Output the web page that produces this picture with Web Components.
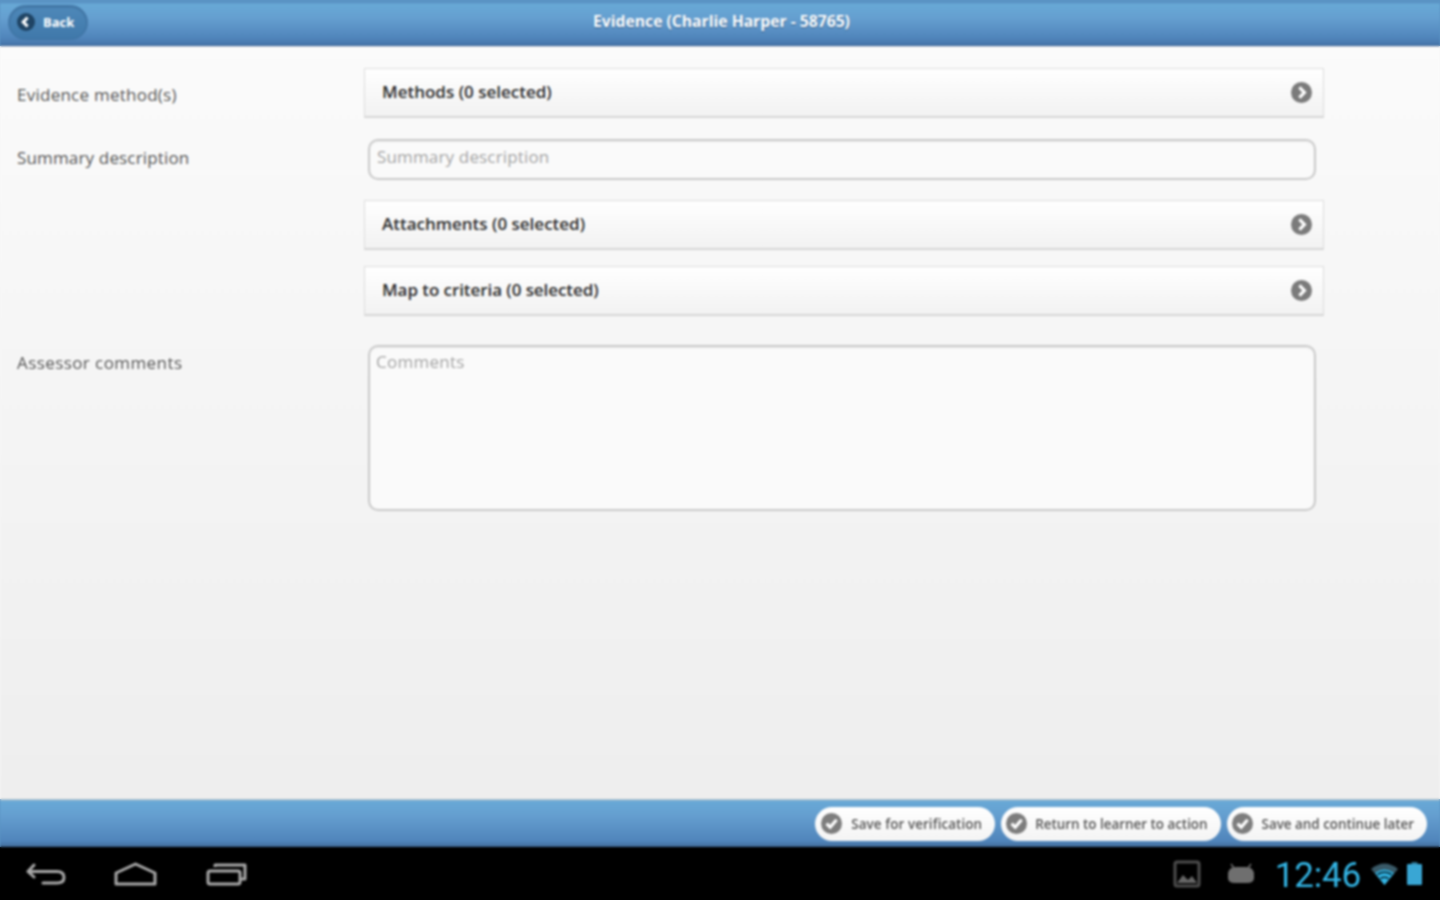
<!DOCTYPE html>
<html><head><meta charset="utf-8"><style>
html,body{margin:0;height:100%}
body{width:1440px;height:900px;overflow:hidden;font-family:"Open Sans","Liberation Sans",sans-serif;background:linear-gradient(#5a93c4 0 46px,#f5f5f5 46px 799px,#5a93c4 799px 847px,#000 847px)}
app-shell{filter:blur(.8px)}
</style></head><body>
<app-shell>
<top-bar slot="top" title-text="Evidence (Charlie Harper - 58765)"></top-bar>
<form-page slot="main">
  <form-row label="Evidence method(s)" style="--after:21px;--label-top:15px;--lls:.25px"><list-button>Methods (0 selected)</list-button></form-row>
  <form-row label="Summary description" style="--after:20px;--label-top:7px;--lls:.16px"><text-box placeholder="Summary description" h="41" style="--top:5px;--ls:.16px"></text-box></form-row>
  <form-row style="--after:16px"><list-button>Attachments (0 selected)</list-button></form-row>
  <form-row style="--after:29px"><list-button style="--ls:-.07px">Map to criteria (0 selected)</list-button></form-row>
  <form-row label="Assessor comments" style="--after:0px;--label-top:6px;--lls:.42px"><text-box placeholder="Comments" h="166" style="--top:4px;--ls:.27px;--left:6px"></text-box></form-row>
</form-page>
<action-bar slot="actions">
  <pill-button style="--ls:.1px;--pad:6px">Save for verification</pill-button>
  <pill-button style="--pad:5px;--gap:8px">Return to learner to action</pill-button>
  <pill-button>Save and continue later</pill-button>
</action-bar>
<nav-bar slot="nav"></nav-bar>
</app-shell>
<script>
const def=(name,html,init)=>customElements.define(name,class extends HTMLElement{
  constructor(){super();this.attachShadow({mode:'open'}).innerHTML=html;}
  connectedCallback(){init&&init(this,this.shadowRoot);}
});
def('app-shell',`<style>:host{display:flex;flex-direction:column;width:1440px;height:900px}
::slotted([slot=main]){flex:1}</style>
<slot name="top"></slot><slot name="main"></slot><slot name="actions"></slot><slot name="nav"></slot>`);

def('top-bar',`<style>:host{display:flex;align-items:center;position:relative;height:46px;box-sizing:border-box;padding:0 0 2px 8px;
background:linear-gradient(#5a93c4 0,#5a93c4 3px,#68a9d6 4px,#659fd0 18px,#5085bb 38px,#4777ac 44px,#3f6a9c 46px);color:#fff}
.back{display:flex;align-items:center;box-sizing:border-box;width:80px;height:35px;border-radius:18px;padding-left:8px;gap:8px;
background:linear-gradient(#4f89b9,#3f78aa);border:1px solid #4376a6;box-shadow:inset 0 1px 2px rgba(20,50,90,.35);font-size:13px;font-weight:700}
.ic{width:18px;height:18px;flex:none}
h1{position:absolute;left:0;right:0;margin:0;padding-left:3px;top:11px;text-align:center;font-size:15.7px;line-height:20px;font-weight:700;text-shadow:0 1px 1px rgba(30,60,100,.6)}
</style><div class="back"><svg class="ic" viewBox="0 0 18 18"><circle cx="9" cy="9" r="9" fill="#1f4464"/><path d="M10.600 4.600 6.200 9l4.400 4.400" fill="none" stroke="#fff" stroke-width="3"/></svg><span>Back</span></div><h1></h1>`,
(e,s)=>s.querySelector('h1').textContent=e.getAttribute('title-text'));

def('form-page',`<style>:host{display:block;box-sizing:border-box;padding:22px 116px 0 0;background:linear-gradient(#fbfbfb,#eeeeee);box-shadow:inset 0 1px 0 #d5d8dc}</style><slot></slot>`);

def('form-row',`<style>:host{display:flex;margin-bottom:var(--after,0)}
.l{box-sizing:border-box;width:364px;flex:none;padding:var(--label-top,0) 0 0 17px;font-size:17px;line-height:24px;color:#555;letter-spacing:var(--lls,0)}
.f{flex:1}</style><div class="l"></div><div class="f"><slot></slot></div>`,
(e,s)=>s.querySelector('.l').textContent=e.getAttribute('label')||'');

def('list-button',`<style>:host{display:flex;align-items:center;justify-content:space-between;box-sizing:border-box;height:50px;padding:0 11px 1px 17px;
border:1px solid #dcdcdc;border-bottom:2px solid #d6d6d6;background:linear-gradient(#fff,#f2f2f2);font-size:17px;font-weight:600;color:#2c2c2c;letter-spacing:var(--ls,0)}
span{padding-bottom:2px}
svg{width:21px;height:21px;flex:none}</style><span><slot></slot></span>
<svg viewBox="0 0 21 21"><circle cx="10.500" cy="10.500" r="10.500" fill="#7b7b7b"/><path d="M8.400 5.400 13.400 10.500 8.400 15.600" fill="none" stroke="#fff" stroke-width="3.200"/></svg>`);

def('text-box',`<style>:host{display:block;box-sizing:border-box;margin:0 8px 0 4px;padding:var(--top,6px) 7px 0 var(--left,7px);border:2px solid #c9c9c9;border-radius:10px;background:#fafafa;
font-size:17px;line-height:22px;color:#a4a4a4;letter-spacing:var(--ls,0);box-shadow:inset 0 1px 2px rgba(0,0,0,.06)}</style><span></span>`,
(e,s)=>{s.querySelector('span').textContent=e.getAttribute('placeholder');e.style.height=e.getAttribute('h')+'px'});

def('action-bar',`<style>:host{display:flex;justify-content:flex-end;align-items:center;gap:6px;box-sizing:border-box;height:48px;padding:1px 13px 0 0;
background:linear-gradient(#c9c9c9 0,#68a9d6 2px,#659fd0 16px,#5085bb 42px,#44709f 47px,#2f4f75 48px)}</style><slot></slot>`);

def('pill-button',`<style>:host{display:flex;align-items:center;box-sizing:border-box;height:34px;padding:0 13px 0 var(--pad,5px);gap:var(--gap,9px);border-radius:17px;
background:linear-gradient(#fff,#f4f4f4);font-size:13.4px;font-weight:600;color:#555;white-space:nowrap;letter-spacing:var(--ls,0)}
svg{width:21px;height:21px;flex:none}</style>
<svg viewBox="0 0 21 21"><circle cx="10.500" cy="10.500" r="10.500" fill="#7d7d7d"/><path d="M5.600 10.600 9.200 14.200 15.600 6.800" fill="none" stroke="#fff" stroke-width="3.200"/></svg><slot></slot>`);

def('nav-bar',`<style>:host{display:flex;align-items:center;height:53px;background:#000;position:relative}
.keys{display:flex;align-items:center;padding-left:26px;gap:48px;flex:1}
.keys svg:last-child{margin-left:1px}
.tray{display:flex;align-items:center;padding-right:18px}
svg{display:block;flex:none}
.t{font-family:Roboto,"Open Sans",sans-serif;font-weight:400;font-size:35px;line-height:53px;color:#33b5e5;margin:4px 10px 0 20px;letter-spacing:-.2px}
</style>
<div class="keys">
<svg width="40" height="24" viewBox="0 0 40 24" fill="none" stroke="#a8a8a8" stroke-width="3" stroke-linejoin="round" stroke-linecap="round"><path d="M8 3 2 9.500 8 15M2 9.500H31Q38 9.500 38 15.500 38 21 31 21H17"/></svg>
<svg width="43" height="24" viewBox="0 0 43 24" fill="none" stroke="#a8a8a8" stroke-width="3" stroke-linejoin="round"><path d="M21.500 2 41 11V22H2V11Z"/></svg>
<svg width="41" height="24" viewBox="0 0 41 24" fill="none" stroke="#a8a8a8" stroke-width="3" stroke-linejoin="round"><rect x="2" y="9" width="32" height="13" rx="2"/><path d="M9 5V3H39V17H35"/></svg>
</div>
<div class="tray">
<svg width="28" height="28" viewBox="0 0 28 28"><rect x="2" y="2" width="24" height="24" rx="2" fill="none" stroke="#4c4c4c" stroke-width="3"/><path d="M4 23 10 15 15 20 19 16 24 23Z" fill="#666"/></svg>
<svg width="28" height="22" viewBox="0 0 28 22" style="margin-left:26px"><path d="M1 12Q1 4 9 4H19Q27 4 27 12V15Q27 20 20 20H8Q1 20 1 15Z" fill="#6f6f6f"/><path d="M7 5 4 1M21 5 24 1" stroke="#6f6f6f" stroke-width="1.500"/></svg>
<span class="t">12:46</span>
<svg width="27" height="22" viewBox="0 0 27 22" style="margin-right:9px"><path d="M0 6Q13.500-5 27 6L13.500 22Z" fill="#3a5a68"/><path d="M4 10Q13.500 3 23 10L13.500 22Z" fill="#33b5e5"/><path d="M6.500 11.500Q13.500 7 20.500 11.500" stroke="#06222e" stroke-width="1.500" fill="none"/><path d="M9.500 15.500Q13.500 13 17.500 15.500" stroke="#06222e" stroke-width="1.500" fill="none"/></svg>
<svg width="15" height="23" viewBox="0 0 15 23"><rect x="4.500" y="0" width="6" height="3" fill="#2b6f8c"/><rect x="0" y="2" width="15" height="21" rx="1" fill="#39a6d4"/></svg>
</div>`);
</script>
</body></html>
